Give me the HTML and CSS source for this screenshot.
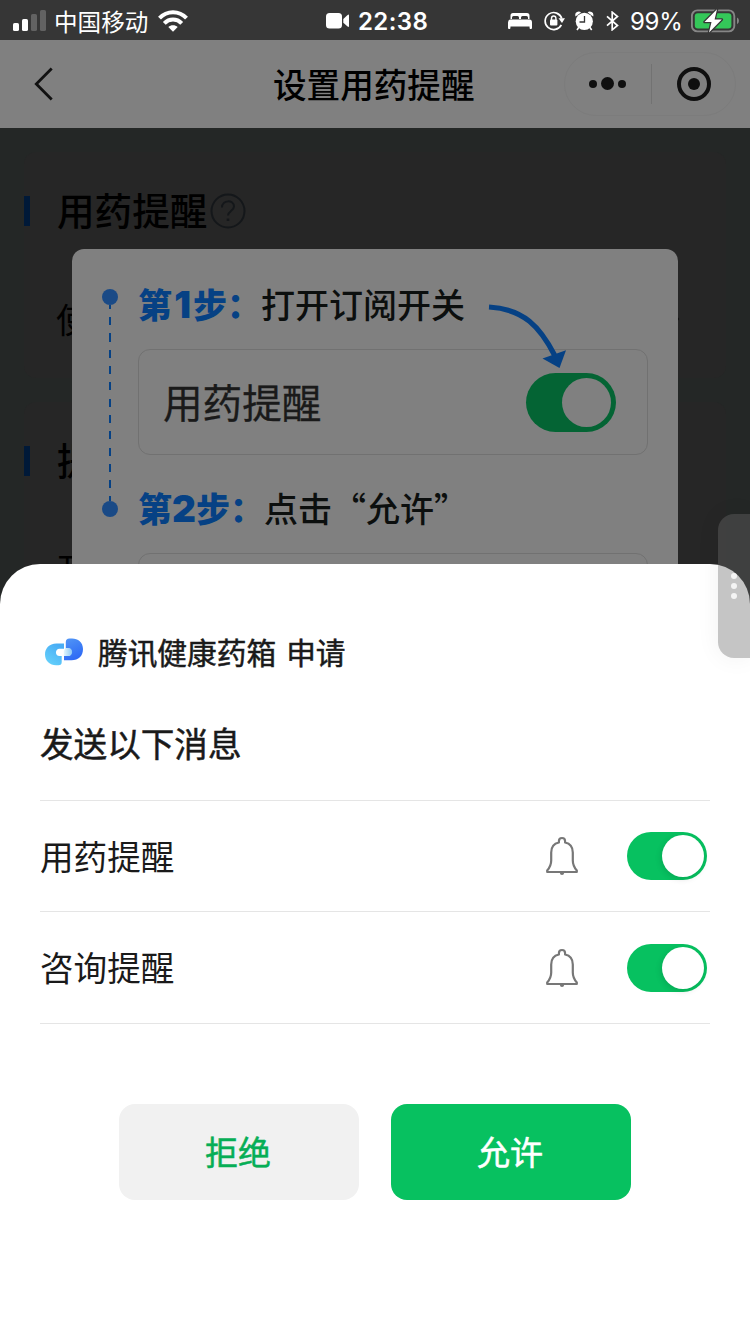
FILE: index.html
```html
<!DOCTYPE html>
<html lang="zh-CN">
<head>
  <meta charset="UTF-8">
  <meta name="viewport" content="width=device-width, initial-scale=1.0">
  <title>设置用药提醒</title>
  <link rel="stylesheet" href="styles.css">
</head>
<body>
  <div class="screen">

    <!-- Status bar -->
    <div class="status-bar">
      <div class="status-left">
        <svg width="34" height="22" viewBox="0 0 34 22" fill="#fff">
          <rect x="0" y="13" width="6" height="8" rx="1.6"/>
          <rect x="9" y="9" width="6" height="12" rx="1.6"/>
          <rect x="18" y="4" width="6" height="17" rx="1.6" fill="#626262"/>
          <rect x="27" y="0" width="6" height="21" rx="1.6" fill="#626262"/>
        </svg>
        <span class="carrier">中国移动</span>
        <svg class="wifi" width="30" height="22" viewBox="0 0 30 22">
          <g fill="none" stroke="#fff" stroke-width="4">
            <path d="M1.5 8.2C9 .3 21 .3 28.500 8.200"/>
            <path d="M6.300 13.300C11.200 8.300 18.800 8.300 23.700 13.300"/>
          </g>
          <path d="M15 21.700L10.300 17.100C12.800 14.600 17.200 14.600 19.700 17.100Z" fill="#fff"/>
        </svg>
      </div>
      <div class="status-center">
        <svg width="24" height="16" viewBox="0 0 24 16" fill="#fff">
          <rect x="0" y="0" width="16" height="15.500" rx="3.500"/>
          <path d="M17.300 6L21.600 2Q23 1 23 2.600V13Q23 14.600 21.600 13.500L17.300 9.700Z"/>
        </svg>
        <span class="clock">22:38</span>
      </div>
      <div class="status-right">
        <svg width="24" height="16" viewBox="0 0 24 16" fill="#fff">
          <path d="M2.500 6V2.500Q2.500 0 5 0H19Q21.500 0 21.500 2.500V6H20V4.500Q20 3 18.500 3H14.500Q13 3 13 4.500V6H11V4.500Q11 3 9.500 3H5.500Q4 3 4 4.500V6Z"/>
          <path d="M0 15V9.500Q0 6.500 2.500 6.500H21.500Q24 6.500 24 9.500V15Q24 16 23 16H22Q21.500 16 21.500 13.600H2.500Q2.500 16 2 16H1Q0 16 0 15Z"/>
        </svg>
        <svg class="rotation" width="21" height="20" viewBox="0 0 21 20">
          <path d="M17.300 13.800A8.500 8.500 0 1 1 17.800 7.600" fill="none" stroke="#fff" stroke-width="1.700"/>
          <path d="M14.500 7.200H21L18 12Z" fill="#fff"/>
          <rect x="6" y="8.500" width="7.400" height="6" rx="1" fill="#fff"/>
          <path d="M7.500 9V7.200A2.200 2.200 0 0 1 11.900 7.200V9" fill="none" stroke="#fff" stroke-width="1.400"/>
        </svg>
        <svg class="alarm" width="19" height="20" viewBox="0 0 19 20" fill="#fff">
          <circle cx="9.300" cy="10.300" r="8.600"/>
          <path d="M.5 5.500Q-.5 2 2 1Q4.500 0 6 1.500ZM18.200 5.500Q19 2 16.600 1Q14 0 12.700 1.500Z"/>
          <path d="M4 16L2 19M14.600 16L16.700 19" stroke="#fff" stroke-width="1.600"/>
          <path d="M9.500 5V11H4.500" fill="none" stroke="#363636" stroke-width="1.300"/>
        </svg>
        <svg class="bluetooth" width="13" height="20" viewBox="0 0 13 20">
          <path d="M1 5.300L11.500 14.500L6.200 18.800V1.200L11.500 5.500L1 14.700" fill="none" stroke="#fff" stroke-width="1.700"/>
        </svg>
        <span class="percent">99%</span>
        <svg class="battery" width="48" height="24" viewBox="0 0 48 24">
          <rect x=".9" y="1.400" width="42.400" height="21" rx="5.500" fill="none" stroke="#868686" stroke-width="1.900"/>
          <rect x="3.800" y="4.200" width="36.600" height="15.400" rx="3" fill="#34c759"/>
          <path d="M46 8.500Q48 9.500 48 11.800Q48 14 46 15.300Z" fill="#868686"/>
          <path d="M26 .3L13.500 13H20.500L18 23.500L30.800 10.500H23.600Z" fill="#fff" stroke="#363636" stroke-width="2.500" paint-order="stroke" stroke-linejoin="round"/>
        </svg>
      </div>
    </div>

    <!-- Mini program nav bar -->
    <div class="nav-bar">
      <svg class="back" width="22" height="36" viewBox="0 0 22 36">
        <path d="M17.700 2.500L2.300 18L17.700 33.500" fill="none" stroke="#111" stroke-width="2.800"/>
      </svg>
      <h1>设置用药提醒</h1>
      <div class="capsule">
        <svg width="38" height="14" viewBox="0 0 38 14" fill="#0f0f0f">
          <circle cx="4" cy="7" r="4"/>
          <circle cx="18.500" cy="6.500" r="6.500"/>
          <circle cx="33" cy="7" r="4"/>
        </svg>
        <i class="capsule-line"></i>
        <svg width="34" height="34" viewBox="0 0 34 34">
          <circle cx="17" cy="17" r="15" fill="none" stroke="#0f0f0f" stroke-width="4"/>
          <circle cx="17" cy="17" r="6" fill="#0f0f0f"/>
        </svg>
      </div>
    </div>

    <!-- Page under the mask -->
    <div class="page">
      <section class="card card-notice">
        <h2><span>用药提醒</span><svg width="36" height="36" viewBox="0 0 36 36" fill="none" stroke="#14171a" stroke-width="2">
            <circle cx="18" cy="18" r="16.500"/>
            <path d="M12 14.500C12 6.500 24 6.500 24 13.500C24 18 18 18 18 22.500"/>
            <path d="M18 25.500V28" stroke-width="2.600"/>
          </svg></h2>
        <div class="card-row">
          <span>使用</span>
          <svg width="10" height="18" viewBox="0 0 10 18"><path d="M1 1L8 9L1 17" fill="none" stroke="#111" stroke-width="2"/></svg>
        </div>
      </section>
      <section class="card card-time">
        <h2><span>提醒</span></h2>
        <div class="card-row"><span>开始</span></div>
      </section>
    </div>

    <!-- Guide dialog -->
    <div class="guide">
      <div class="rail">
        <i class="dot"></i>
        <i class="dashes"></i>
        <i class="dot"></i>
      </div>
      <div class="steps">
        <p class="step"><b>第<span>1</span>步：</b>打开订阅开关</p>
        <div class="demo">
          <span>用药提醒</span>
          <i class="switch switch-demo"></i>
        </div>
        <p class="step"><b>第<span>2</span>步：</b>点击“允许”</p>
        <div class="demo"></div>
      </div>
      <svg class="arrow" width="80" height="66" viewBox="0 0 80 66">
        <path d="M1 5C36 7 52 25 66.500 53" fill="none" stroke="#064184" stroke-width="5.200"/>
        <path d="M54.500 56.500L78 48.300L71.500 66Z" fill="#064184"/>
      </svg>
    </div>

    <!-- Subscribe sheet -->
    <div class="sheet">
      <div class="applicant">
        <svg width="38" height="28" viewBox="0 0 38 28">
          <defs>
            <linearGradient id="sky" x1="0" y1="1" x2=".6" y2="0">
              <stop offset="0" stop-color="#68d5fb"/>
              <stop offset="1" stop-color="#49adf5"/>
            </linearGradient>
            <linearGradient id="blue" x1="0" y1="0" x2=".4" y2="1">
              <stop offset="0" stop-color="#5297f6"/>
              <stop offset="1" stop-color="#2f6bf5"/>
            </linearGradient>
            <linearGradient id="pill" x1="0" y1="0" x2="1" y2="0">
              <stop offset="0" stop-color="#e3f6fd"/>
              <stop offset="1" stop-color="#8bc8f5"/>
            </linearGradient>
          </defs>
          <path d="M19 5.500H11.500C4 5.500 0 10.500 0 16.500C0 23 5 27.300 11 27.300H13.500Q16.700 27.300 16.700 24V18H14.500C9.800 18 9.800 10.700 14.500 10.700H19Z" fill="url(#sky)"/>
          <path d="M20.800 4Q20.800.5 24.500.5H27C33 .5 38 4.500 38 11C38 18 33.500 22.300 26.500 22.300H19V18H23C27.500 18 27.500 10.500 23 10.500H20.800Z" fill="url(#blue)"/>
          <path d="M20.500 10H23.500C28.300 10 28.300 18 23.500 18H18.800V13Z" fill="url(#pill)"/>
        </svg>
        <span>腾讯健康药箱</span>
        <span>申请</span>
      </div>
      <h3>发送以下消息</h3>
      <ul class="messages">
        <li>
          <span>用药提醒</span>
          <svg class="bell" width="34" height="40" viewBox="0 0 34 40">
            <path d="M17 2C15 2 13.900 3.500 13.900 5.300V6.500C9 7.500 6.200 11.500 6.200 16.500V24.500C6.200 29 4.800 31.500 2.200 34.500V36H31.800V34.500C29.200 31.500 27.800 29 27.800 24.500V16.500C27.800 11.500 25 7.500 20.100 6.500V5.300C20.100 3.500 19 2 17 2Z" fill="none" stroke="#777" stroke-width="2.200" stroke-linejoin="round"/>
            <path d="M14.700 36.500H19.300Q19 39 17 39Q15 39 14.700 36.500Z" fill="#777"/>
          </svg>
          <i class="switch"></i>
        </li>
        <li>
          <span>咨询提醒</span>
          <svg class="bell" width="34" height="40" viewBox="0 0 34 40">
            <path d="M17 2C15 2 13.900 3.500 13.900 5.300V6.500C9 7.500 6.200 11.500 6.200 16.500V24.500C6.200 29 4.800 31.500 2.200 34.500V36H31.800V34.500C29.200 31.500 27.800 29 27.800 24.500V16.500C27.800 11.500 25 7.500 20.100 6.500V5.300C20.100 3.500 19 2 17 2Z" fill="none" stroke="#777" stroke-width="2.200" stroke-linejoin="round"/>
            <path d="M14.700 36.500H19.300Q19 39 17 39Q15 39 14.700 36.500Z" fill="#777"/>
          </svg>
          <i class="switch"></i>
        </li>
      </ul>
      <div class="actions">
        <button class="btn btn-reject">拒绝</button>
        <button class="btn btn-allow">允许</button>
      </div>
    </div>

    <!-- Floating side handle -->
    <div class="handle"><i></i><i></i><i></i></div>
  </div>
</body>
</html>
```
FILE: styles.css
```css
* {
  box-sizing: border-box;
  margin: 0;
  padding: 0;
}

body {
  font-family: "Noto Sans CJK SC", sans-serif;
  background: #242726;
  color: #1a1a1a;
}

svg {
  display: block;
  flex-shrink: 0;
}

.screen {
  position: relative;
  width: 750px;
  height: 1334px;
  overflow: hidden;
  display: flex;
  flex-direction: column;
}

/* Status bar */
.status-bar {
  height: 40px;
  padding: 0 11px 0 13px;
  background: #363636;
  color: #fff;
  display: grid;
  grid-template-columns: 313px 1fr auto;
  align-items: center;
}

.status-left,
.status-center,
.status-right {
  display: flex;
  align-items: center;
}

.carrier {
  font-size: 23.6px;
  line-height: 40px;
  margin-left: 7px;
}

.wifi {
  margin-left: 10px;
}

.clock,
.percent {
  font-family: Inter, sans-serif;
  font-size: 24px;
  line-height: 40px;
  padding-top: 2px;
}

.clock {
  margin-left: 8px;
  font-weight: 600;
  letter-spacing: 0.4px;
}

.rotation { margin-left: 12px; }
.alarm { margin-left: 10px; }
.bluetooth { margin-left: 12px; }

.percent {
  width: 53px;
  margin-left: 11px;
  letter-spacing: -0.3px;
  white-space: nowrap;
}

.battery {
  margin-left: 8px;
}

/* Nav bar */
.nav-bar {
  height: 88px;
  padding: 0 14px 0 34px;
  background: #808080;
  display: grid;
  grid-template-columns: 172px 1fr 172px;
  align-items: center;
}

.nav-bar h1 {
  font-size: 33.6px;
  line-height: 50px;
  font-weight: 500;
  color: #000;
  margin-left: 67px;
  white-space: nowrap;
}

.capsule {
  height: 64px;
  padding: 0 24px 0 24px;
  border: 1px solid #7c7c7c;
  border-radius: 32px;
  display: flex;
  align-items: center;
  justify-content: space-between;
}

.capsule-line {
  width: 1px;
  height: 40px;
  margin-right: 1px;
  background: #727272;
}

/* Page */
.page {
  flex: 1;
  padding: 24px;
  display: flex;
  flex-direction: column;
  gap: 24px;
  background: #242726;
}

.card {
  background: #262626;
  border-radius: 12px;
  color: #000;
  display: flow-root;
}

.card-notice { height: 226px; }
.card-time { height: 400px; }

.card h2 {
  height: 30px;
  margin-top: 44px;
  padding-left: 27px;
  border-left: 6px solid #001938;
  font-size: 37.6px;
  font-weight: 500;
  line-height: 30px;
  display: flex;
  align-items: center;
}

.card h2 span {
  padding-bottom: 4px;
}

.card h2 svg {
  margin-left: 3px;
}

.card-row {
  display: flex;
  justify-content: space-between;
  align-items: center;
  height: 50px;
  margin-top: 68px;
  padding: 0 46px 0 32px;
  font-size: 34px;
  line-height: 50px;
}

/* Guide dialog, lies over the page */
.guide {
  position: absolute;
  top: 249px;
  left: 72px;
  width: 606px;
  height: 420px;
  padding: 29px 30px 0;
  background: #808080;
  border-radius: 12px;
  display: grid;
  grid-template-columns: 36px 1fr;
}

.rail {
  width: 16px;
  padding-top: 11px;
}

.dot {
  display: block;
  width: 16px;
  height: 16px;
  border-radius: 50%;
  background: #1a4a86;
}

.dashes {
  display: block;
  width: 2px;
  height: 196px;
  margin: 0 auto;
  background: repeating-linear-gradient(#064184 0 4px, transparent 4px 12.200px, #064184 12.200px 16.300px);
}

.step {
  height: 54px;
  line-height: 52px;
  font-size: 34px;
  font-weight: 500;
  color: #0c0f0e;
  white-space: nowrap;
}

.step b {
  font-weight: 900;
  color: #064184;
}

.step b span {
  display: inline-block;
  min-width: 21px;
  font-family: Inter, sans-serif;
  font-size: 37px;
  line-height: 1;
  text-align: center;
}

.demo {
  height: 106px;
  margin: 17px 0 27px;
  padding: 0 31px 0 24px;
  border: 1px solid #717171;
  border-radius: 12px;
  display: flex;
  align-items: center;
  justify-content: space-between;
  font-size: 39.6px;
}

.demo span {
  padding-bottom: 3px;
  -webkit-text-stroke: 0.3px;
}

.arrow {
  position: absolute;
  top: 53px;
  left: 416px;
}

/* Switch */
.switch {
  width: 80px;
  height: 48px;
  padding: 3px;
  border-radius: 24px;
  background: #07c160;
  display: flex;
  justify-content: flex-end;
}

.switch::after {
  content: "";
  width: 42px;
  height: 42px;
  border-radius: 50%;
  background: #fff;
  box-shadow: -1px 2px 6px rgba(0, 0, 0, 0.12);
}

.switch-demo {
  width: 90px;
  height: 59px;
  padding: 5px;
  border-radius: 30px;
  background: #046434;
}

.switch-demo::after {
  width: 49px;
  height: 49px;
  background: #808080;
  box-shadow: none;
}

/* Subscribe sheet, slides over everything */
.sheet {
  position: absolute;
  left: 0;
  right: 0;
  bottom: 0;
  height: 770px;
  padding: 68px 40px 0;
  background: #fff;
  border-radius: 40px 40px 0 0;
}

.applicant {
  height: 40px;
  padding-left: 5px;
  display: flex;
  align-items: center;
  font-size: 29.700px;
}

.applicant span {
  margin-left: 15px;
  padding-bottom: 2px;
}

.applicant span + span {
  margin-left: 10px;
}

.applicant span,
.sheet h3,
.btn {
  font-weight: 400;
  -webkit-text-stroke: 0.5px;
}

.sheet h3 {
  height: 50px;
  margin-top: 46px;
  font-size: 33.600px;
  line-height: 50px;
}

.messages {
  margin-top: 32px;
  list-style: none;
  border-top: 1px solid #e5e5e5;
}

.messages li {
  height: 111px;
  padding-right: 3px;
  border-bottom: 1px solid #e5e5e5;
  display: flex;
  align-items: center;
  font-size: 33.600px;
}

.messages li + li {
  height: 112px;
}

.messages li span {
  padding-bottom: 2px;
}

.bell {
  margin-left: auto;
}

.messages .switch {
  margin-left: 48px;
}

.actions {
  display: flex;
  justify-content: center;
  gap: 32px;
  margin-top: 80px;
}

.btn {
  width: 240px;
  height: 96px;
  padding: 0 2px 3px 0;
  border: none;
  border-radius: 16px;
  font-family: inherit;
  font-size: 33px;
}

.btn-reject {
  background: #f1f1f1;
  color: #06ae56;
}

.btn-allow {
  background: #07c160;
  color: #fff;
}

/* Side handle */
.handle {
  position: absolute;
  top: 514px;
  right: 0;
  width: 32px;
  height: 144px;
  border-radius: 16px 0 0 16px;
  background: rgba(105, 105, 105, 0.39);
  box-shadow: 0 0 24px rgba(0, 0, 0, 0.06);
  display: flex;
  flex-direction: column;
  align-items: center;
  justify-content: center;
  gap: 4px;
}

.handle i {
  width: 6px;
  height: 6px;
  border-radius: 50%;
  background: #f4f4f4;
}
```
